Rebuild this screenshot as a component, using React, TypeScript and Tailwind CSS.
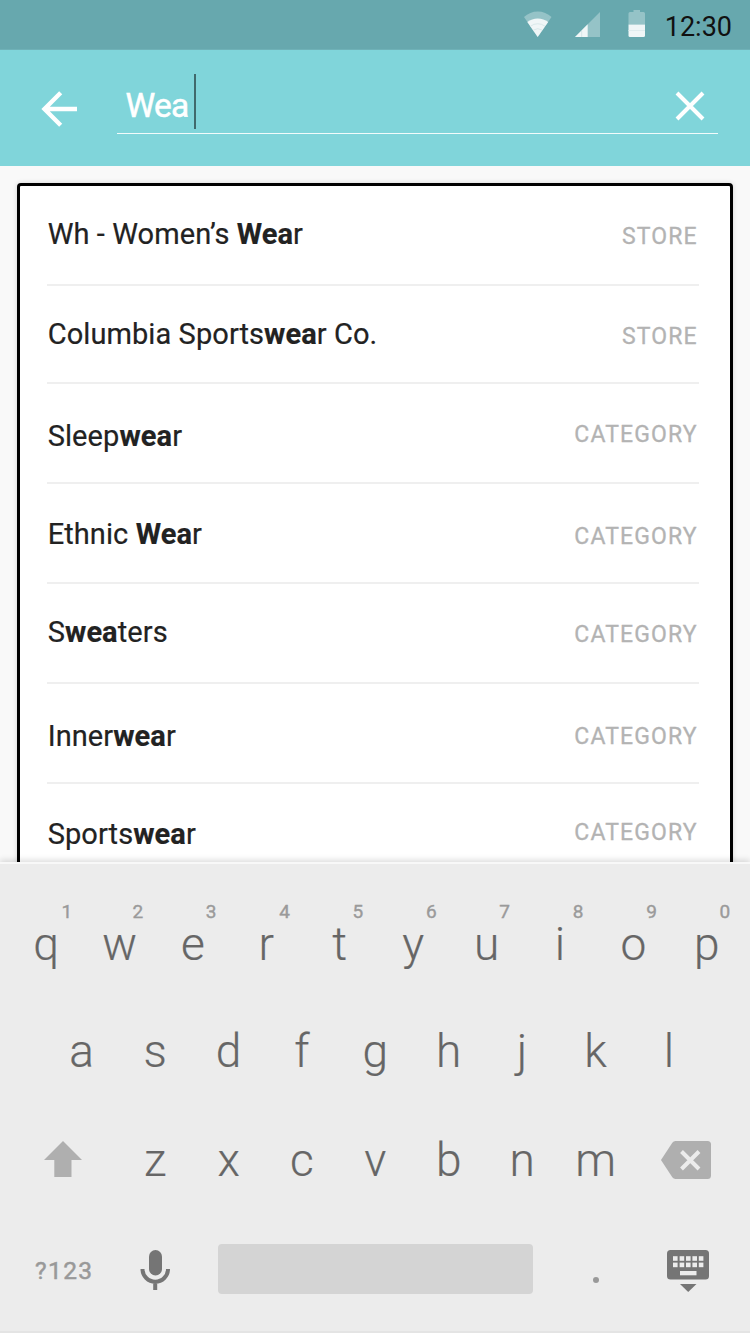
import React from "react";

type Suggestion = {
  before: string;
  match: string;
  after: string;
  kind: "STORE" | "CATEGORY";
  row: string;
  nameTop: string;
  kindTop: string;
};

const suggestions: Suggestion[] = [
  { before: "Wh - Women’s ", match: "Wea", after: "r", kind: "STORE", row: "h-[100px]", nameTop: "mt-[31px]", kindTop: "mt-[37px]" },
  { before: "Columbia Sports", match: "wea", after: "r Co.", kind: "STORE", row: "h-[98px]", nameTop: "mt-[31px]", kindTop: "mt-[37px]" },
  { before: "Sleep", match: "wea", after: "r", kind: "CATEGORY", row: "h-[100px]", nameTop: "mt-[35px]", kindTop: "mt-[37px]" },
  { before: "Ethnic ", match: "Wea", after: "r", kind: "CATEGORY", row: "h-[100px]", nameTop: "mt-[33px]", kindTop: "mt-[39px]" },
  { before: "S", match: "wea", after: "ters", kind: "CATEGORY", row: "h-[100px]", nameTop: "mt-[31px]", kindTop: "mt-[37px]" },
  { before: "Inner", match: "wea", after: "r", kind: "CATEGORY", row: "h-[100px]", nameTop: "mt-[35px]", kindTop: "mt-[39px]" },
  { before: "Sports", match: "wea", after: "r", kind: "CATEGORY", row: "h-[100px]", nameTop: "mt-[33px]", kindTop: "mt-[35px]" },
];

function StatusBar() {
  return (
    <div className="flex h-[50px] shrink-0 items-start justify-end border-b border-[#6fb1b7] bg-[#67a8ae] pr-[18px]">
      <svg className="mt-[10px] mr-[22px]" width="30" height="30" viewBox="0 0 30 30">
        <path d="M1 7 A20 20 0 0 1 28.5 7 L14.7 27 Z" fill="#95c3c7" />
        <path d="M4.3 12 A17 17 0 0 1 25.2 12 L14.7 27 Z" fill="#f0f6f7" />
        <path d="M7.5 16.2 A12 12 0 0 1 22 16.2 M10.5 20 A8 8 0 0 1 19 20" fill="none" stroke="#d9e9ea" strokeWidth="1" />
      </svg>
      <svg className="mt-[12px] mr-[28px]" width="25" height="25" viewBox="0 0 25 25">
        <path d="M0 25 L25 0 V25 Z" fill="#95c3c7" />
        <path d="M0 25 L12.7 12.3 V25 Z" fill="#f0f6f7" />
        <path d="M6.700 19 V25" stroke="#d5e6e8" strokeWidth="1" />
      </svg>
      <svg className="mt-[9px] mr-[19px]" width="18" height="28" viewBox="0 0 18 28">
        <path d="M5.500 1 H12 V3 H15.500 Q17 3 17 4.500 V15.500 H0.500 V4.500 Q.5 3 2 3 H5.500 Z" fill="#95c3c7" />
        <path d="M.5 15.500 H17 V26.500 Q17 28 15.500 28 H2 Q.5 28 .5 26.500 Z" fill="#f0f6f7" />
        <path d="M.5 21.500 H17" stroke="#e0ecee" strokeWidth="1" />
      </svg>
      <span className="mt-[11px] text-[27px] leading-8 text-[#111]">12:30</span>
    </div>
  );
}

function SearchBar() {
  return (
    <div className="flex h-[116px] shrink-0 items-start bg-[#80d5da]">
      <svg className="mt-[41px] ml-[41px]" width="36" height="36" viewBox="0 0 36 36" fill="none" stroke="#fff" strokeWidth="4.4">
        <path d="M36 18 H3.500 M19.700 1.800 L3.500 18 L19.700 34.200" />
      </svg>
      <div className="mt-[24px] ml-[40px] flex h-[60px] w-[601px] items-start border-b border-white/90 pr-[13px] pl-[8.5px]">
        <span className="mt-[12px] w-[63.5px] text-[33.5px] leading-10 tracking-[-0.8px] text-white [-webkit-text-stroke:0.5px_white]">Wea</span>
        <span className="ml-[5px] h-[55px] w-[2px] bg-[#40696c]" />
        <svg className="mt-[17px] ml-auto" width="30" height="30" viewBox="0 0 30 30" fill="none" stroke="#fff" strokeWidth="4">
          <path d="M2 2 L28 28 M28 2 L2 28" />
        </svg>
      </div>
    </div>
  );
}

function SuggestionRow({ item }: { item: Suggestion }) {
  return (
    <li className={`flex shrink-0 items-start justify-between border-b-2 border-[#efefef] ${item.row}`}>
      <span className={`ml-[0.7px] text-[29px] leading-[34px] tracking-[0.08px] whitespace-pre text-[#222] [-webkit-text-stroke:0.2px_#222] ${item.nameTop}`}>
        {item.before}
        <b className="font-bold">{item.match}</b>
        {item.after}
      </span>
      <span className={`mr-[1.2px] text-[23px] leading-7 tracking-[1.15px] text-[#b3b3b3] [-webkit-text-stroke:0.3px_#b3b3b3] ${item.kindTop}`}>{item.kind}</span>
    </li>
  );
}

function Key({ label, digit }: { label: string; digit?: string }) {
  return (
    <div className="relative w-[73.4px] text-center text-[46px] leading-[56px] font-light text-[#666] [-webkit-text-stroke:0.2px_#666]">
      {label}
      {digit && (
        <span className={`absolute top-[-14px] text-[19px] leading-5 font-normal text-[#9a9a9a] [-webkit-text-stroke:0.4px_#9a9a9a] ${digit === "1" ? "left-[52px]" : "left-[49.5px]"}`}>{digit}</span>
      )}
    </div>
  );
}

function Keyboard() {
  return (
    <div className="relative h-[471px] shrink-0 border-t-2 border-[#f8f8f8] bg-[#ececec] shadow-[0_-2px_6px_rgba(0,0,0,0.14)]">
      <div className="flex h-[110px] pt-[52px] pl-[9.5px]">
        {"qwertyuiop".split("").map((c, i) => (
          <Key key={c} label={c} digit={String((i + 1) % 10)} />
        ))}
      </div>
      <div className="flex h-[108px] pt-[49px] pl-[45px]">
        {"asdfghjkl".split("").map((c) => (
          <Key key={c} label={c} />
        ))}
      </div>
      <div className="flex h-[108px] pt-[50px] pl-[44px]">
        <svg className="mt-[9px] mr-[36.5px]" width="38" height="36" viewBox="0 0 38 36" fill="#afafaf">
          <path d="M19 0 L38 19 H27.500 V36 H10.300 V19 H0 Z" />
        </svg>
        {"zxcvbnm".split("").map((c) => (
          <Key key={c} label={c} />
        ))}
        <svg className="mt-[9px] ml-[28.5px]" width="51" height="38" viewBox="0 0 51 38">
          <path d="M14.500 0 H46.500 Q50 0 50 3.500 V34.500 Q50 38 46.500 38 H14.500 Q12.500 38 11.300 36.300 L0 19 L11.300 1.700 Q12.500 0 14.500 0 Z" fill="#afafaf" />
          <path d="M20.500 10.500 L38 28 M38 10.500 L20.500 28" stroke="#ececec" strokeWidth="4" />
        </svg>
      </div>
      <div className="flex h-[143px] items-start border-b-2 border-[#e4e4e4] pl-[35px]">
        <span className="mt-[65px] w-[105px] text-[24.5px] leading-8 font-normal tracking-[1.4px] text-[#999] [-webkit-text-stroke:0.5px_#999]">?123</span>
        <svg className="mt-[60px]" width="30" height="40" viewBox="0 0 30 40">
          <rect x="9" width="13" height="25.500" rx="6.500" fill="#757575" />
          <path d="M2.500 19 A12.700 12.700 0 0 0 28 19 M15.200 31 V40" fill="none" stroke="#757575" strokeWidth="4" />
        </svg>
        <div className="mt-[54px] ml-[48px] h-[50px] w-[315px] rounded-[4px] bg-[#d4d4d4]" />
        <span className="mt-[87px] ml-[60px] size-[6px] rounded-full bg-[#999]" />
        <svg className="mt-[60px] ml-[68px]" width="42" height="42" viewBox="0 0 42 42">
          <rect width="42" height="29.500" rx="3.500" fill="#757575" />
          {[6, 12.6, 19, 25.4, 31.8].map((x) => (
            <g key={x} fill="#ececec">
              <rect x={x} y="6.200" width="4.600" height="4.600" />
              <rect x={x} y="12.600" width="4.600" height="4.600" />
            </g>
          ))}
          <rect x="13" y="21" width="16.500" height="4.300" fill="#ececec" />
          <path d="M13 34 H29.500 L21.200 42 Z" fill="#757575" />
        </svg>
      </div>
    </div>
  );
}

export default function App() {
  return (
    <div className="flex h-[1333px] w-[750px] flex-col overflow-hidden bg-[#f9f9f9] font-['Roboto',sans-serif]">
      <StatusBar />
      <SearchBar />
      <main className="h-[696px] shrink-0 overflow-hidden px-[17px] pt-[17px]">
        <ul className="flex h-[740px] flex-col rounded-[4px] border-[3px] border-black bg-white pr-[31px] pl-[27px] shadow-[0_0_5px_rgba(0,0,0,0.15)]">
          {suggestions.map((item) => (
            <SuggestionRow key={item.before} item={item} />
          ))}
        </ul>
      </main>
      <Keyboard />
    </div>
  );
}
